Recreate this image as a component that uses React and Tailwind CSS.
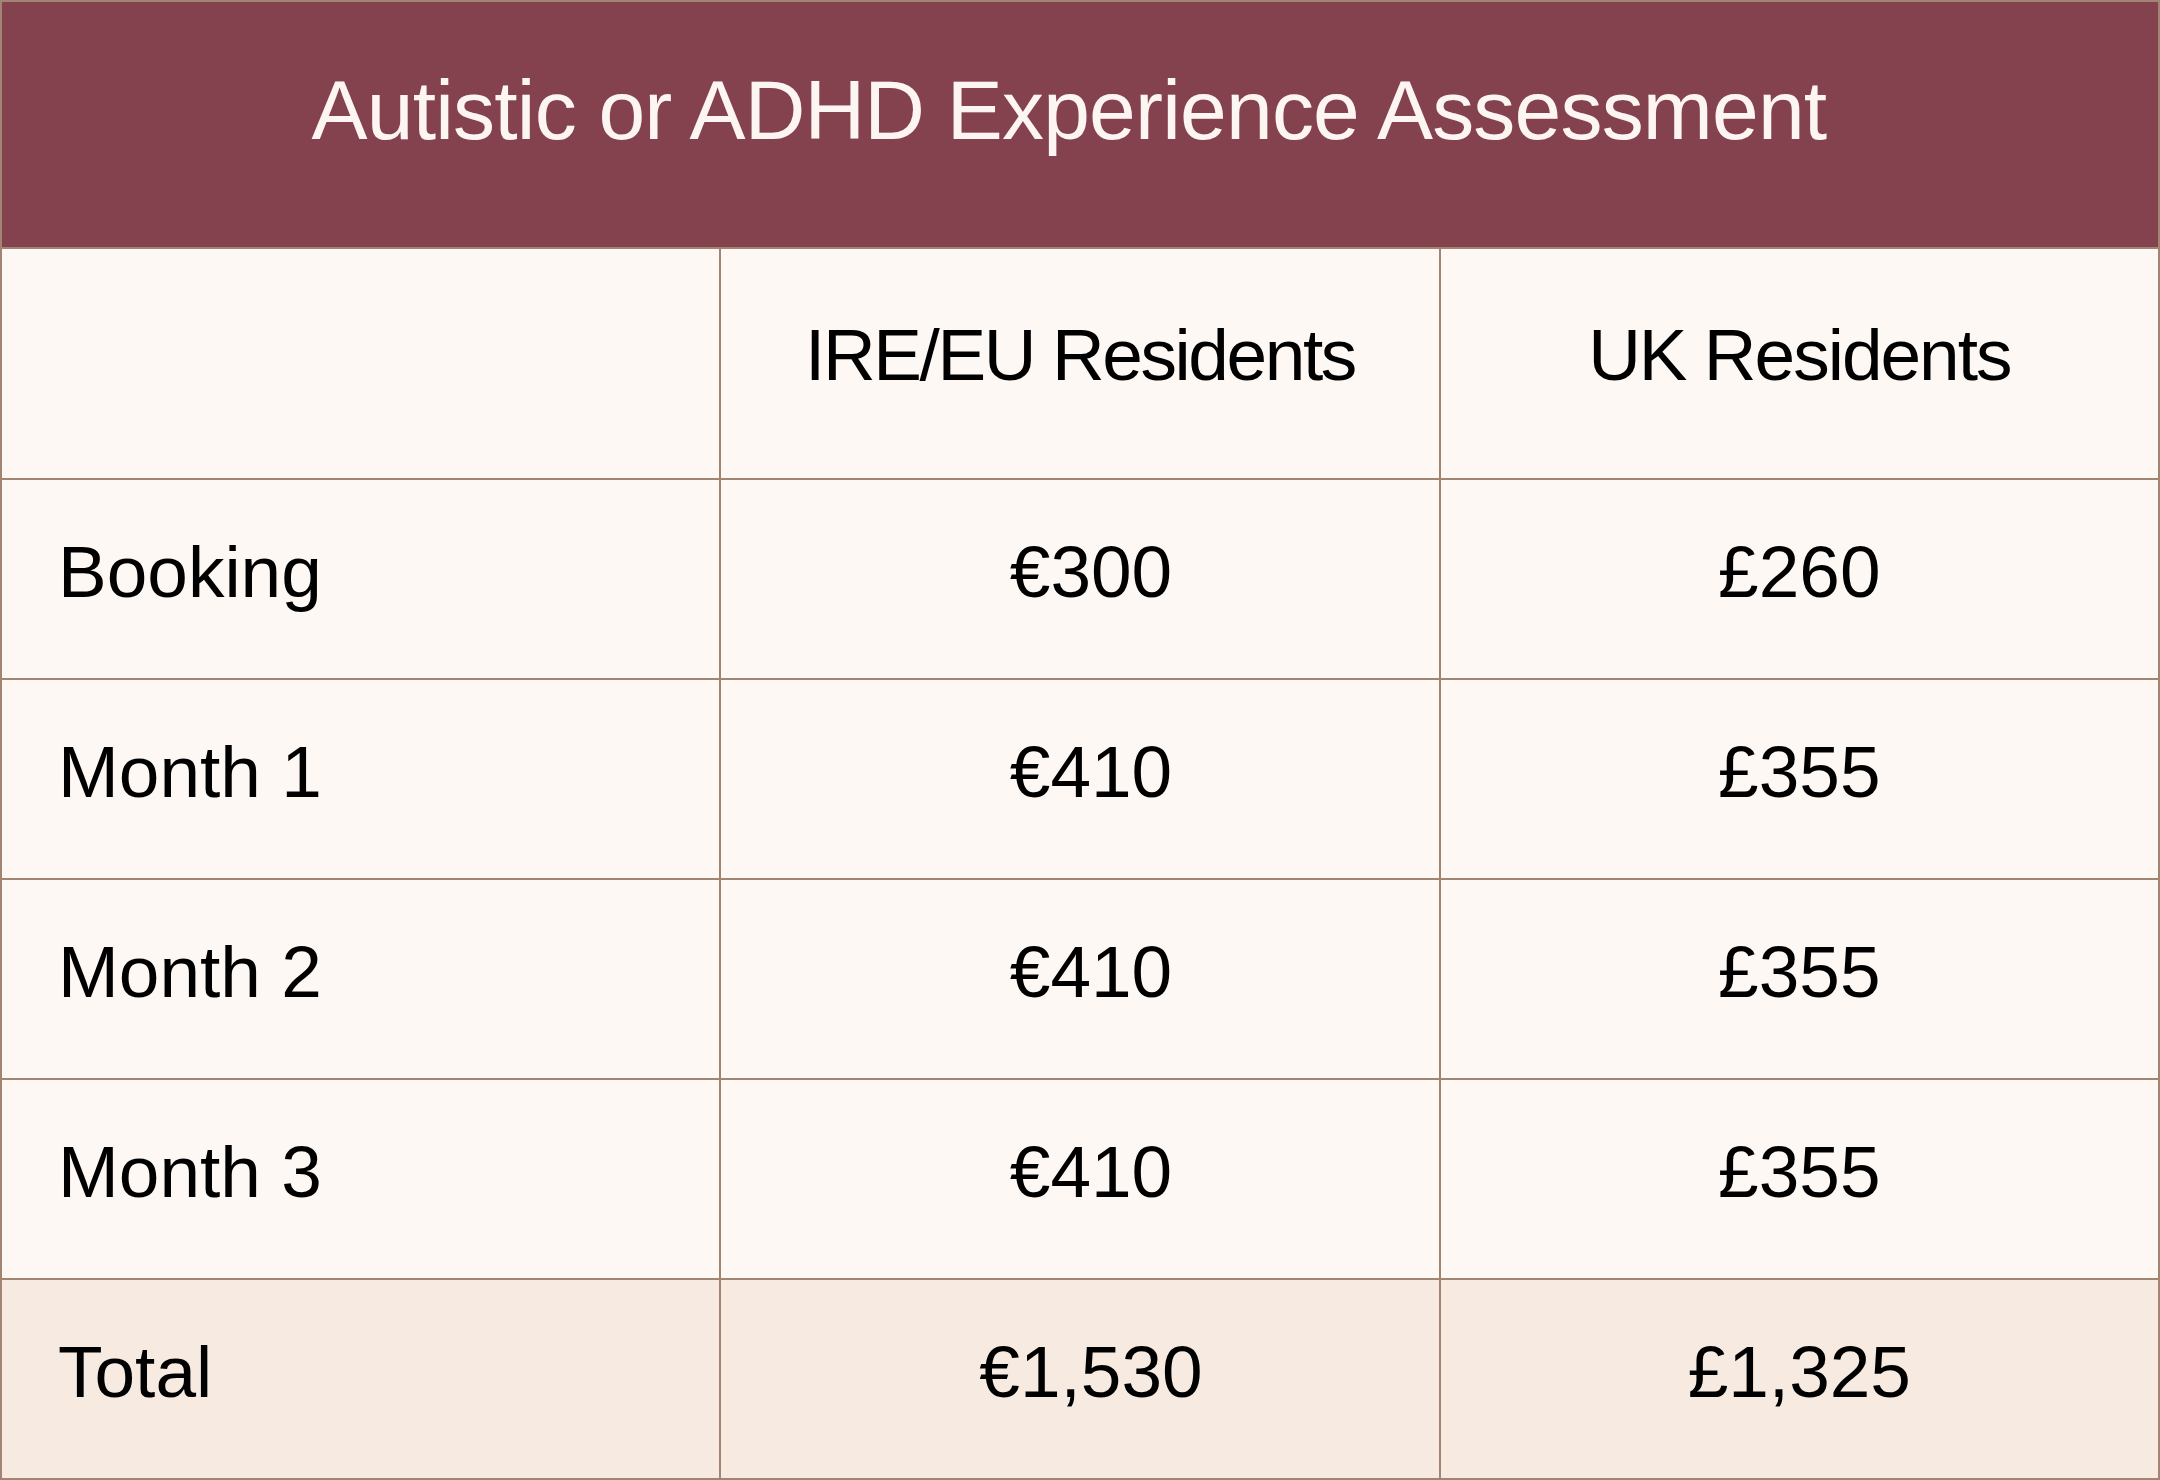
import React from "react";

const rows = [
  { label: "Booking", eu: "€300", uk: "£260" },
  { label: "Month 1", eu: "€410", uk: "£355" },
  { label: "Month 2", eu: "€410", uk: "£355" },
  { label: "Month 3", eu: "€410", uk: "£355" },
];

function Cell({ children, left, eu, total }) {
  return (
    <div
      className={`flex items-center pb-[16px] text-[73px] leading-none text-black ${
        left ? "justify-start pl-[56px]" : "justify-center"
      } ${eu ? "pl-[22px]" : ""} ${total ? "bg-[#f6eae1]" : "bg-[#fef8f5]"}`}
    >
      {children}
    </div>
  );
}

export default function App() {
  return (
    <div className="w-[2160px] h-[1480px] bg-[#a28472] p-[2px] grid grid-cols-3 gap-[2px] grid-rows-[245px_229px_198px_198px_198px_198px_198px] font-['Liberation_Sans',Arial,sans-serif]">
      <div className="col-span-3 bg-[#84424f] flex items-center justify-center pb-[29px] pr-[22px]">
        <h1 className="text-[84px] leading-none font-normal tracking-[-0.8px] text-[#fdf5f2]">
          Autistic or ADHD Experience Assessment
        </h1>
      </div>

      <div className="bg-[#fef8f5]" />
      <div className="bg-[#fef8f5] flex items-center justify-center pb-[19px] text-[73px] leading-none tracking-[-2.4px] text-black">
        IRE/EU Residents
      </div>
      <div className="bg-[#fef8f5] flex items-center justify-center pb-[19px] text-[73px] leading-none tracking-[-2px] text-black">
        UK Residents
      </div>

      {rows.map((r) => (
        <React.Fragment key={r.label}>
          <Cell left>{r.label}</Cell>
          <Cell eu>{r.eu}</Cell>
          <Cell>{r.uk}</Cell>
        </React.Fragment>
      ))}

      <Cell left total>Total</Cell>
      <Cell eu total>€1,530</Cell>
      <Cell total>£1,325</Cell>
    </div>
  );
}
